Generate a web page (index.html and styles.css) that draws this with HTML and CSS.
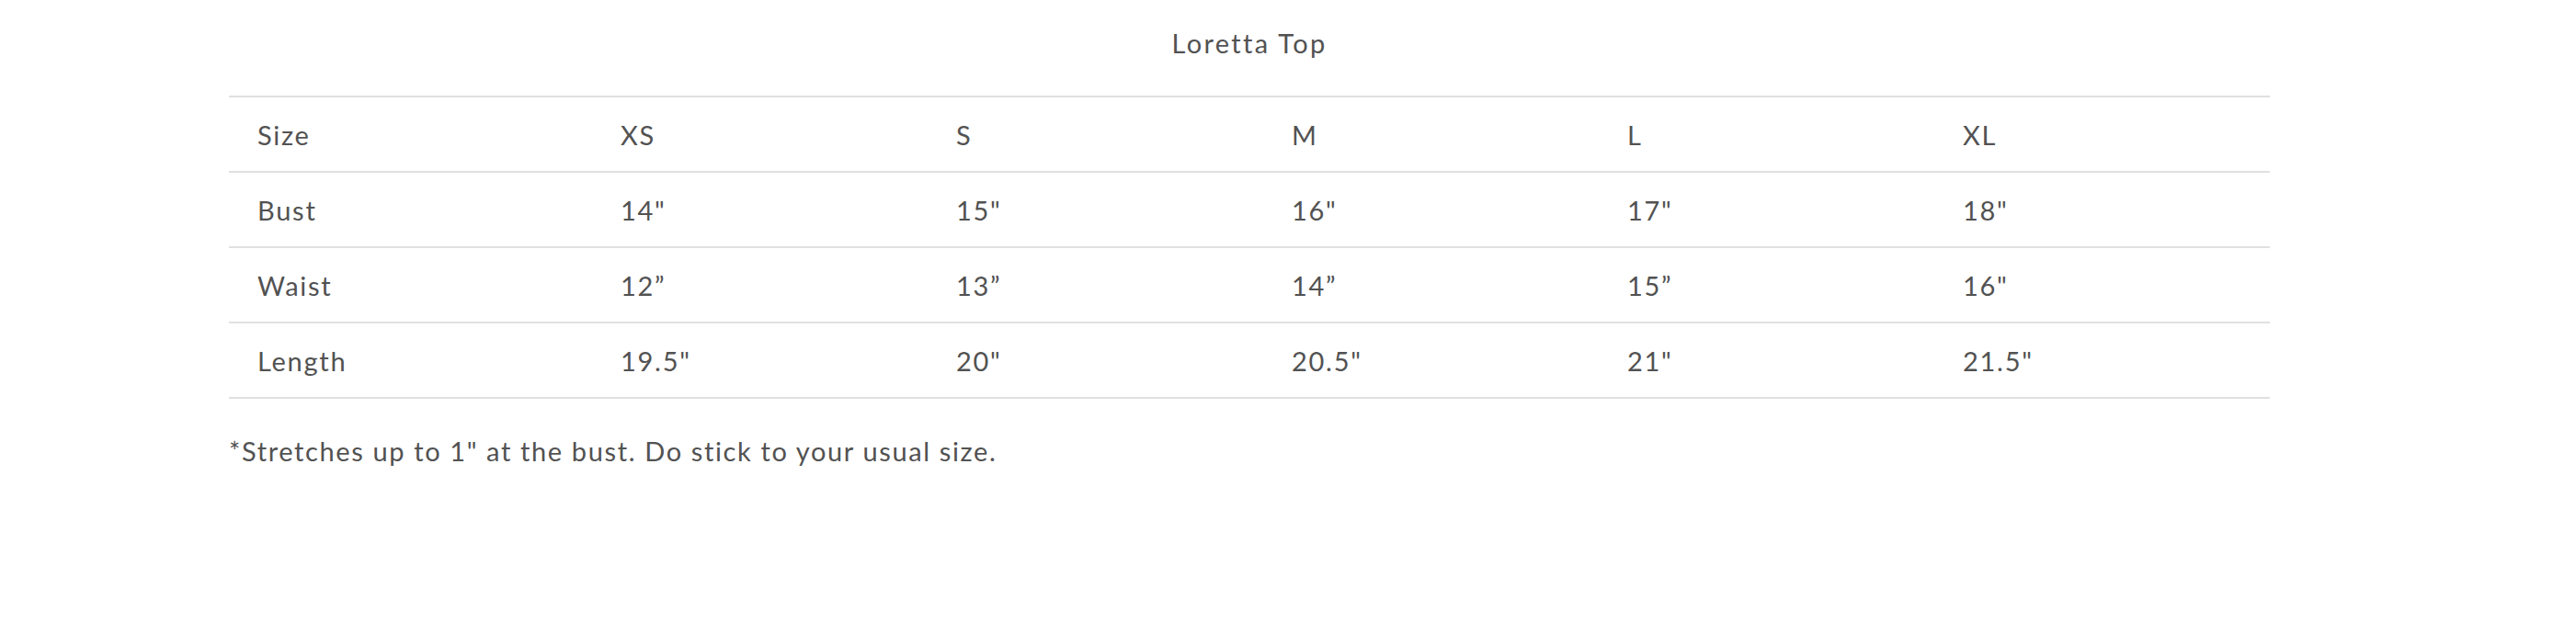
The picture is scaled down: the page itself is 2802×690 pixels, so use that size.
FILE: index.html
```html
<!DOCTYPE html>
<html lang="en">
<head>
<meta charset="utf-8">
<title>Loretta Top – Size Chart</title>
<link rel="stylesheet" href="styles.css">
</head>
<body>
<div class="size-chart">
  <h2 class="size-chart__title">Loretta Top</h2>
  <table class="size-chart__table">
    <colgroup>
      <col class="col-label">
      <col class="col-size">
      <col class="col-size">
      <col class="col-size">
      <col class="col-size">
      <col class="col-size">
    </colgroup>
    <tbody>
      <tr><td>Size</td><td>XS</td><td>S</td><td>M</td><td>L</td><td>XL</td></tr>
      <tr><td>Bust</td><td>14"</td><td>15"</td><td>16"</td><td>17"</td><td>18"</td></tr>
      <tr><td>Waist</td><td>12”</td><td>13”</td><td>14”</td><td>15”</td><td>16"</td></tr>
      <tr><td>Length</td><td>19.5"</td><td>20"</td><td>20.5"</td><td>21"</td><td>21.5"</td></tr>
    </tbody>
  </table>
  <p class="size-chart__note">*Stretches up to 1" at the bust. Do stick to your usual size.</p>
</div>
</body>
</html>
```

FILE: styles.css
```css
html, body {
  margin: 0;
  padding: 0;
  background: #ffffff;
}

body {
  font-family: Lato, "Open Sans", sans-serif;
  color: #525252;
}

.size-chart {
  width: 2220px;
  margin-left: 249px;
  padding-top: 27px;
}

.size-chart__title {
  margin: 0;
  font-size: 29px;
  font-weight: 400;
  letter-spacing: 0.08em;
  line-height: 40px;
  text-align: center;
  height: 77px;
}

.size-chart__table {
  width: 100%;
  border-collapse: collapse;
  table-layout: fixed;
}

.col-label { width: 395px; }
.col-size { width: 365px; }

.size-chart__table td {
  border-top: 2px solid #e0e0e0;
  border-bottom: 2px solid #e0e0e0;
  padding: 0 0 0 31px;
  height: 80px;
  font-size: 29px;
  letter-spacing: 0.06em;
  vertical-align: middle;
}

.size-chart__note {
  margin: 37px 0 0 0;
  font-size: 29px;
  letter-spacing: 0.056em;
  line-height: 40px;
}
```
